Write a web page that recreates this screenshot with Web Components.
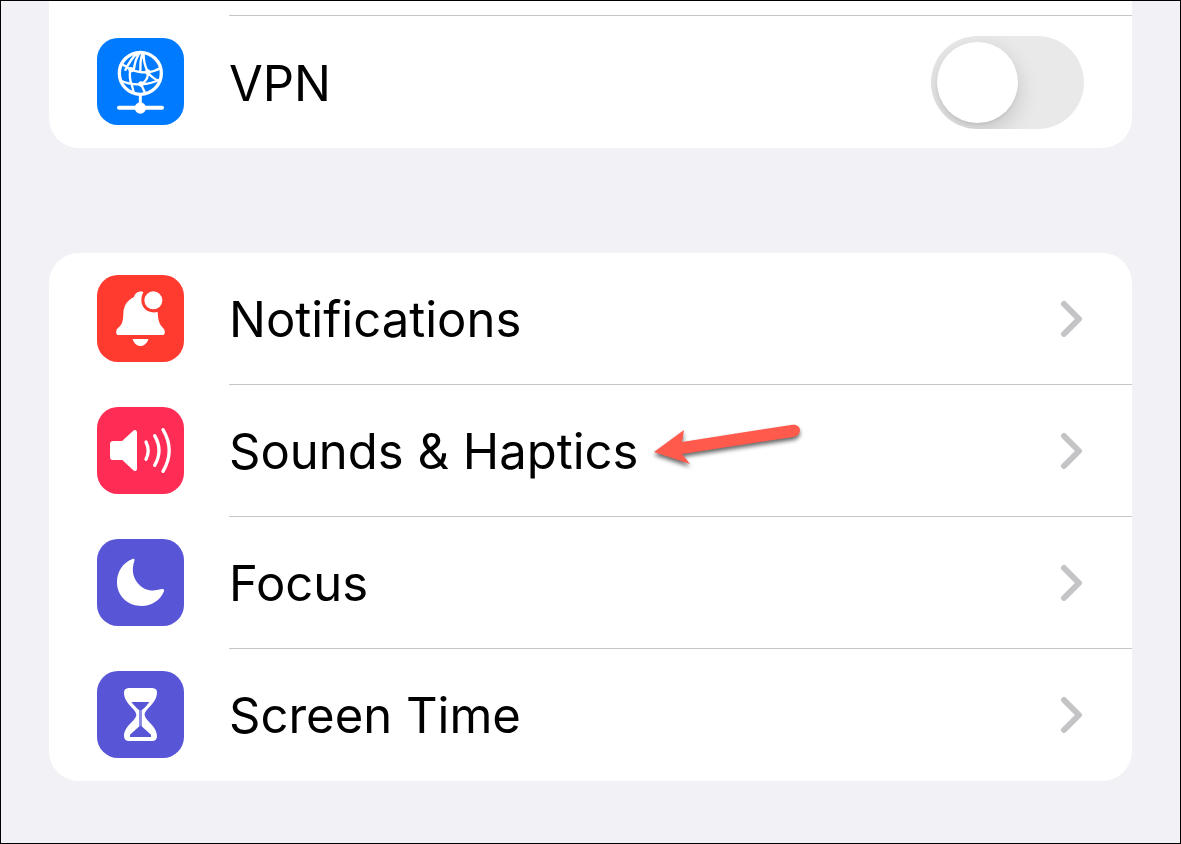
<!DOCTYPE html>
<html lang="en">
<head>
<meta charset="utf-8">
<title>Settings</title>
<style>
  html, body { height: 100%; margin: 0; }
  body { font-family: Inter, "Liberation Sans", sans-serif; color: #000; background: #f2f1f6; }
</style>
</head>
<body>
<settings-page>
  <settings-group class="continued">
    <settings-toggle icon="vpn" label="VPN"></settings-toggle>
  </settings-group>
  <settings-group>
    <settings-link icon="bell" label="Notifications"></settings-link>
    <settings-link icon="sound" label="Sounds &amp; Haptics"><pointer-arrow></pointer-arrow></settings-link>
    <settings-link icon="moon" label="Focus"></settings-link>
    <settings-link icon="hourglass" label="Screen Time"></settings-link>
  </settings-group>
</settings-page>
<script>
const glyphs = {
  vpn: ['#007aff', `<g fill="none" stroke="#fff" stroke-width="7" transform="translate(0 -3)">
    <circle cx="151" cy="130" r="63" stroke-width="10"/>
    <path d="M142 69C124 84 114 104 105 122M94 101L121 118Q144 128 174 127Q196 124 210 115M150 67C137 84 133 106 131 123M157 67C152 86 150 105 151 124M161 68C160 90 164 108 174 127M121 118C118 136 119 150 125 163L131 187M174 127C174 143 168 156 153 163M174 127C183 140 193 147 207 153M88 150C105 158 128 165 153 163C177 162 198 155 211 148M153 163L165 188"/>
    <path d="M151 195V231" stroke-width="9"/><path d="M87 233H216" stroke-width="12" stroke-linecap="round"/></g>
    <g fill="#fff"><circle cx="151" cy="231" r="17"/><circle cx="123" cy="116" r="8"/><circle cx="173" cy="123" r="8"/><circle cx="153" cy="159" r="8"/></g>`],
  bell: ['#ff3b30', `<path fill="#fff" d="M160 72C146 68 135 75 132 87C111 97 101 113 100 137C99 166 95 169 82 182C77 187 77 201 85 201H218C226 201 226 188 221 182C208 168 205 162 203 132C172 140 141 113 160 72Z"/>
    <circle cx="190" cy="97" r="27" fill="#fff"/><path fill="#fff" d="M128 213H175C172 226 162 234 151 234C140 234 131 225 128 213Z"/>`],
  sound: ['#ff2d55', `<path fill="#fff" d="M70 123H96L129 93C134 88 141 90 141 98V206C141 214 134 215 129 210L97 180H70Q60 180 60 170V133Q60 123 70 123Z"/>
    <path fill="none" stroke="#fff" stroke-width="10" stroke-linecap="round" d="M168 126Q181 152 168 178M194 107Q220 152 194 196M219 89Q256 152 219 214"/>`],
  moon: ['#5856d6', `<path fill="#fff" d="M126 82C132 79 135 81 133 87C125 111 128 134 142 152C160 174 184 180 212 172C219 170 224 172 222 178C211 206 184 222 155 222C113 222 81 192 81 151C81 119 98 93 126 82Z"/>`],
  hourglass: ['#5856d6', `<path fill="#fff" d="M116 72H187Q201 73 201 85C201 119 164 135 164 152C164 169 201 185 201 216Q201 231 186 231H117Q102 231 102 216C102 185 139 169 139 152C139 135 102 119 102 86Q102 73 116 72Z"/>
    <path fill="#5856d6" d="M124 114H178C171 125 161 134 155 139V187L183 212V219H120V212L148 187V139C142 134 133 126 124 114Z"/><path stroke="#fff" stroke-width="1" d="M151.5 138V185"/>`]
};

class SettingsPage extends HTMLElement {
  constructor() {
    super();
    this.attachShadow({mode: 'open'}).innerHTML = `<style>
      :host { display: block; box-sizing: border-box; min-height: 100%; border: 1px solid #000; background: #f2f1f6; }
      main { display: flex; flex-direction: column; gap: 105px; padding: 0 48px 48px; }
    </style><main><slot></slot></main>`;
  }
}
class SettingsGroup extends HTMLElement {
  constructor() {
    super();
    this.attachShadow({mode: 'open'}).innerHTML = `<style>
      :host { display: block; background: #fff; border-radius: 30px; overflow: hidden; }
      :host(.continued) { border-radius: 0 0 30px 30px; }
      .previous { display: none; height: 14px; margin-left: 180px; border-bottom: 1px solid #c6c6c8; }
      :host(.continued) .previous { display: block; }
      ::slotted(:last-child) { --line: transparent; }
    </style><div class="previous"></div><slot></slot>`;
  }
}
class SettingsIcon extends HTMLElement {
  connectedCallback() {
    const [color, shape] = glyphs[this.getAttribute('name')];
    this.attachShadow({mode: 'open'}).innerHTML = `<style>
      :host { display: block; flex: none; width: 87px; height: 87px; border-radius: 21px; background: ${color}; }
      svg { display: block; width: 100%; height: 100%; }
    </style><svg viewBox="21 21 261 261" aria-hidden="true">${shape}</svg>`;
  }
}
const rowStyle = `
  :host { display: block; }
  .row { display: flex; align-items: stretch; height: 132px; padding-left: 48px; color: inherit; text-decoration: none; }
  settings-icon { margin: 22px 45px 0 0; }
  .body { flex: 1; display: flex; align-items: center; padding-right: 48px; border-bottom: 1px solid var(--line, #c6c6c8); }
  .label { font-size: 49px; line-height: 60px; padding-top: 3px; white-space: nowrap; }
  .end { margin-left: auto; flex: none; }`;

class SettingsLink extends HTMLElement {
  connectedCallback() {
    this.attachShadow({mode: 'open'}).innerHTML = `<style>${rowStyle}</style>
      <a class="row" href="#"><settings-icon name="${this.getAttribute('icon')}"></settings-icon>
      <span class="body"><span class="label"></span><slot></slot>
      <svg class="end" width="24" height="38" viewBox="0 0 24 38" fill="none" stroke="#c4c4c6" stroke-width="6" stroke-linecap="round" stroke-linejoin="round" aria-hidden="true"><path d="M4 4L19 19L4 34"/></svg></span></a>`;
    this.shadowRoot.querySelector('.label').textContent = this.getAttribute('label');
  }
}
class SettingsToggle extends HTMLElement {
  connectedCallback() {
    this.attachShadow({mode: 'open'}).innerHTML = `<style>${rowStyle}
      .body { border-bottom: 0; }
      input { appearance: none; position: relative; width: 153px; height: 93px; margin: 0; border-radius: 47px; background: #e9e9ea; overflow: hidden; }
      input::before { content: ""; position: absolute; left: 6px; top: 6px; width: 81px; height: 81px; border-radius: 50%; background: #fff; box-shadow: 0 8px 22px rgba(0,0,0,.16), 0 2px 3px rgba(0,0,0,.06); }
      input:checked { background: #34c759; }
      input:checked::before { left: 66px; }
    </style>
      <div class="row"><settings-icon name="${this.getAttribute('icon')}"></settings-icon>
      <span class="body"><label class="label" for="switch"></label><input class="end" id="switch" type="checkbox" role="switch"></span></div>`;
    this.shadowRoot.querySelector('.label').textContent = this.getAttribute('label');
  }
}
class PointerArrow extends HTMLElement {
  constructor() {
    super();
    this.attachShadow({mode: 'open'}).innerHTML = `<style>
      :host { display: block; margin-left: 14px; padding-bottom: 12px; }
      svg { display: block; overflow: visible; filter: drop-shadow(0 3px 2px rgba(0,0,0,.6)); }
    </style><svg width="150" height="52" viewBox="0 0 150 52" aria-hidden="true"><path fill="#ff5a4c" d="M2 33L32 11L30 23L139 6C150 4 151 16 141 18L30 35L38 45Z"/></svg>`;
  }
}
customElements.define('settings-icon', SettingsIcon);
customElements.define('pointer-arrow', PointerArrow);
customElements.define('settings-link', SettingsLink);
customElements.define('settings-toggle', SettingsToggle);
customElements.define('settings-group', SettingsGroup);
customElements.define('settings-page', SettingsPage);
</script>
</body>
</html>
